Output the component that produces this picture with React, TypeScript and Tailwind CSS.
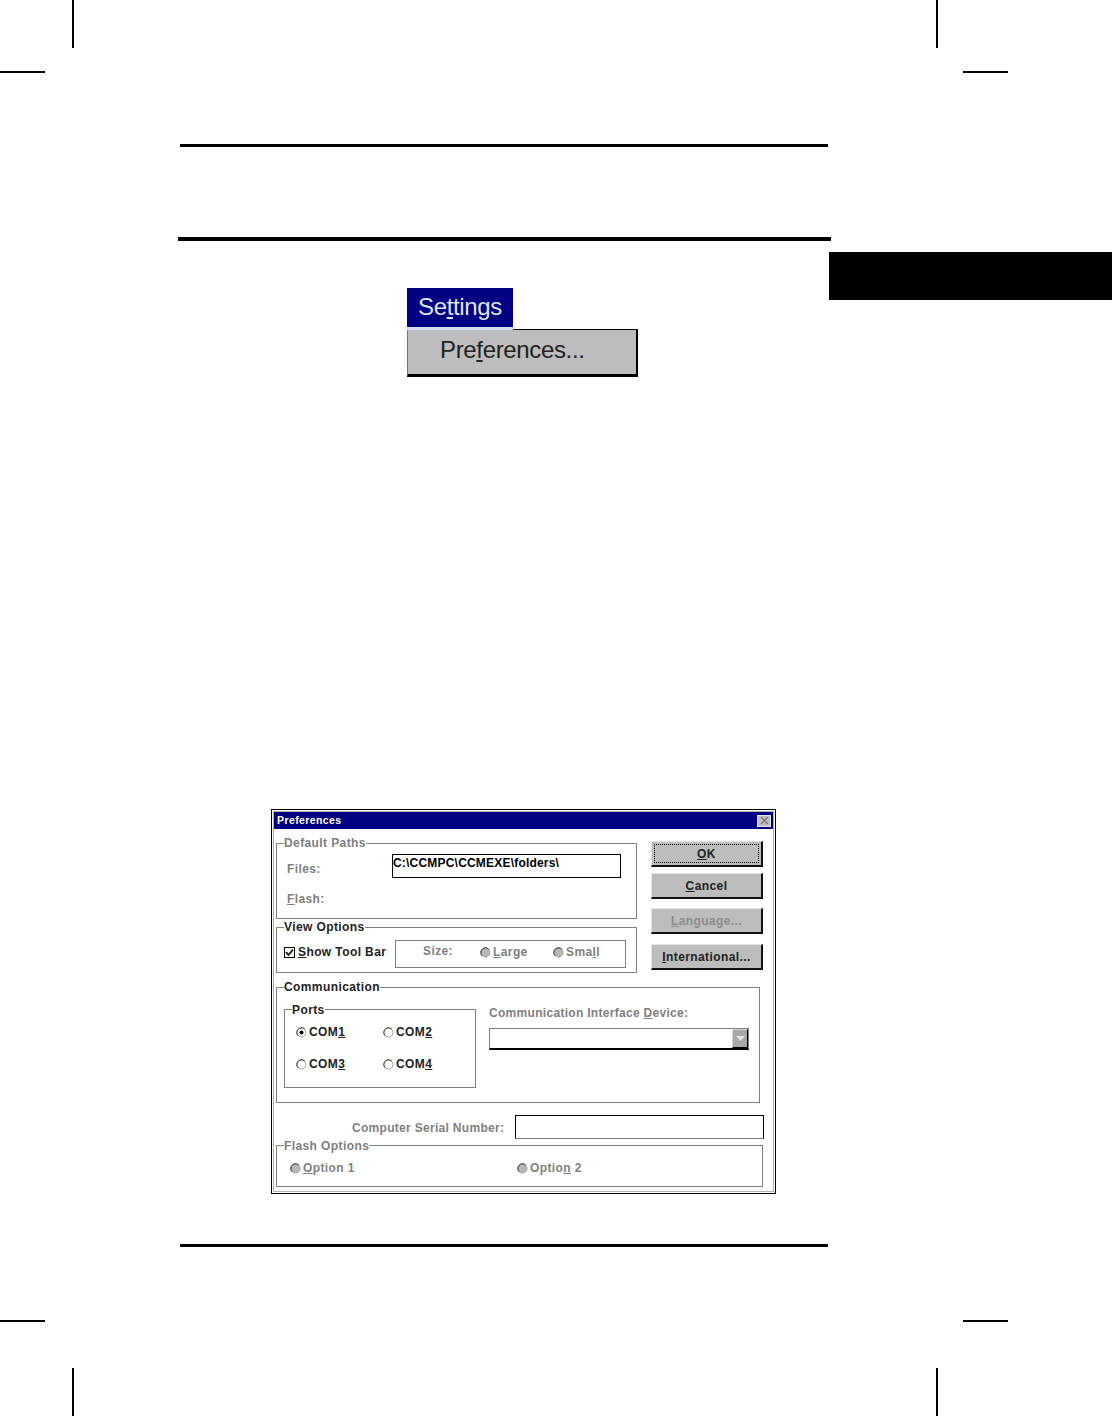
import React from "react";

const F = "font-['Liberation_Sans',Arial,sans-serif]";
const G = "text-[#808080]";

function Group({ title, className, titleClass, children }: { title: string; className: string; titleClass?: string; children?: React.ReactNode }) {
  return (
    <div className={`relative border border-[#808080] ${className}`}>
      <span className={`absolute left-[7px] bg-white whitespace-nowrap text-[12px] leading-[16px] tracking-[0.4px] font-bold ${titleClass ?? G}`}>{title}</span>
      {children}
    </div>
  );
}

function Radio({ checked, disabled }: { checked?: boolean; disabled?: boolean }) {
  return (
    <svg width="11" height="11" viewBox="0 0 11 11" className="shrink-0">
      <circle cx="5.5" cy="5.5" r="4.5" fill={disabled ? "#b8b8b8" : "#fff"} stroke="#a0a0a0" />
      <path d="M2.2 8.8A4.6 4.6 0 0 1 2.2 2.2 4.6 4.6 0 0 1 8.8 2.2" fill="none" stroke="#333" strokeWidth="1" />
      {checked && <circle cx="5.5" cy="5.5" r="2" fill="#000" />}
    </svg>
  );
}

function Btn({ children, className, disabled, focus }: { children: React.ReactNode; className?: string; disabled?: boolean; focus?: boolean }) {
  return (
    <div className={`relative w-[112px] h-[26px] bg-[#bdbdbd] border-l border-t border-[#e4e4e4] border-r-2 border-b-2 border-r-[#111] border-b-[#111] flex items-center justify-center text-[12px] tracking-[0.4px] font-bold ${disabled ? "text-[#8c8c8c]" : "text-[#222]"} ${className ?? ""}`}>
      {focus && <div className="absolute inset-[2px] border border-dotted border-black" />}
      {children}
    </div>
  );
}

function Com({ label, u, checked }: { label: string; u: string; checked?: boolean }) {
  return (
    <div className="flex items-center gap-[2px] text-[12px] leading-[16px] tracking-[0.4px] font-bold text-[#222]">
      <Radio checked={checked} />
      <span>{label}<u>{u}</u></span>
    </div>
  );
}

export default function App() {
  return (
    <div className={`${F} relative w-[1112px] h-[1416px] bg-white overflow-hidden flex flex-col`}>
      {/* top crop marks */}
      <div className="h-[48px] flex shrink-0 pl-[72px]">
        <div className="w-[2px] bg-black" />
        <div className="w-[2px] bg-black ml-[862px]" />
      </div>
      <div className="h-[2px] mt-[23px] flex justify-between shrink-0 pr-[104px]">
        <div className="w-[45px] bg-black" />
        <div className="w-[45px] bg-black" />
      </div>

      {/* header rules */}
      <div className="h-[3px] bg-black mt-[71px] ml-[180px] w-[648px] shrink-0" />
      <div className="h-[4px] bg-black mt-[90px] ml-[178px] w-[653px] shrink-0" />

      {/* tab */}
      <div className="h-[48px] w-[283px] bg-black mt-[11px] ml-[829px] -mb-[12px] shrink-0" />

      {/* menu */}
      <div className="ml-[407px] w-[231px] h-[89px] shrink-0 flex flex-col">
        <div className="h-[42px] flex shrink-0">
          <div className="w-[106px] bg-[#000080] text-[#dfe4f7] text-[24px] leading-[38px] pl-[11px] tracking-[-0.35px] border-b-[3px] border-[#d8dcf0]">
            Se<u className="underline-offset-2">t</u>tings
          </div>
          <div className="flex-1 self-end h-[1px] bg-black" />
        </div>
        <div className="flex-1 bg-[#bdbdbd] border-l border-l-[#777] border-r-2 border-r-black border-b-[3px] border-b-black flex items-center pl-[32px] pb-[4px] text-[24px] text-[#222] tracking-[-0.35px]">
          Pre<u className="underline-offset-2">f</u>erences...
        </div>
      </div>

      {/* dialog */}
      <div className="mt-[432px] ml-[271px] w-[505px] h-[385px] shrink-0 border border-black p-[1px]">
        <div className="h-full border border-[#b0b0b0] flex flex-col">
          <div className="h-[17px] bg-[#000080] flex items-center justify-between pl-[3px] pr-[2px] shrink-0 text-white text-[10.5px] font-bold tracking-[0.4px]">
            <span>Preferences</span>
            <div className="w-[14px] h-[12px] bg-[#c0c0c0] border border-[#e0e0e0] flex items-center justify-center">
              <svg width="9" height="9" viewBox="0 0 9 9"><path d="M1 1l7 7M8 1l-7 7" stroke="#777" strokeWidth="1.4" /></svg>
            </div>
          </div>

          <div className="flex pl-[2px] pt-[14px]">
            {/* left top */}
            <div className="w-[361px] shrink-0">
              <Group title="Default Paths" titleClass={`${G} -top-[9px]`} className="h-[76px] w-[361px] pl-[10px] text-[12px] tracking-[0.4px] font-bold">
                <div className="flex items-start h-[38px] pt-[10px]">
                  <span className={`${G} w-[105px] pt-[7px] leading-[16px]`}>Files:</span>
                  <div className="w-[229px] h-[24px] border border-black bg-white text-black leading-[16px] tracking-[0.2px] text-[12px]">C:\CCMPC\CCMEXE\folders\</div>
                </div>
                <div className={`${G} pt-[9px] leading-[16px]`}><u>F</u>lash:</div>
              </Group>
              <Group title="View Options" titleClass="text-[#222] -top-[9px]" className="h-[46px] w-[361px] mt-[8px] flex items-center pl-[7px] pt-[4px]">
                <div className="w-[11px] h-[11px] bg-white border border-black flex items-center justify-center shrink-0">
                  <svg width="9" height="9" viewBox="0 0 9 9"><path d="M1 4l2.5 3L8 1.5" stroke="#000" strokeWidth="1.6" fill="none" /></svg>
                </div>
                <span className="ml-[3px] w-[97px] shrink-0 whitespace-nowrap text-[12px] tracking-[0.4px] font-bold text-[#222]"><u>S</u>how Tool Bar</span>
                <div className={`mt-[4px] w-[231px] h-[28px] pb-[4px] border border-[#808080] flex items-center text-[12px] tracking-[0.4px] font-bold ${G}`}>
                  <span className="ml-[27px] -mt-[2px] w-[57px]">Size:</span>
                  <Radio disabled />
                  <span className="ml-[2px] w-[60px]"><u>L</u>arge</span>
                  <Radio disabled />
                  <span className="ml-[2px]">Sma<u>l</u>l</span>
                </div>
              </Group>
            </div>
            {/* buttons */}
            <div className="ml-[14px] flex flex-col">
              <Btn focus className="-mt-[2px]"><span><u>O</u>K</span></Btn>
              <Btn className="mt-[6px]"><span><u>C</u>ancel</span></Btn>
              <Btn disabled className="mt-[9px]"><span><u>L</u>anguage...</span></Btn>
              <Btn className="mt-[10px]"><span><u>I</u>nternational...</span></Btn>
            </div>
          </div>

          {/* communication */}
          <div className="ml-[2px]">
            <Group title="Communication" titleClass="text-[#222] -top-[9px]" className="mt-[14px] w-[484px] h-[116px] flex">
              <Group title="Ports" titleClass="text-[#222] -top-[8px]" className="ml-[7px] mt-[21px] w-[192px] h-[79px] shrink-0">
                <div className="grid grid-cols-[87px_1fr] pl-[11px] pt-[14px] gap-y-[16px]">
                  <Com label="COM" u="1" checked />
                  <Com label="COM" u="2" />
                  <Com label="COM" u="3" />
                  <Com label="COM" u="4" />
                </div>
              </Group>
              <div className="ml-[13px] pt-[16px] w-[260px]">
                <div className={`whitespace-nowrap text-[12px] leading-[18px] tracking-[0.3px] font-bold ${G}`}>Communication Interface <u>D</u>evice:</div>
                <div className="mt-[6px] h-[22px] border border-[#808080] border-b-2 border-b-black flex justify-end items-start">
                  <div className="w-[16px] h-[19px] bg-[#a8a8a8] border border-[#d8d8d8] border-r-black border-b-black flex items-center justify-center">
                    <svg width="9" height="6" viewBox="0 0 9 6"><path d="M0 0h9L4.5 5z" fill="#e6e6e6" /></svg>
                  </div>
                </div>
              </div>
            </Group>

            <div className="flex items-center h-[24px] mt-[12px]">
              <span className={`ml-[76px] w-[163px] pt-[2px] whitespace-nowrap text-[12px] tracking-[0.3px] font-bold ${G}`}>Computer Serial Number:</span>
              <div className="w-[249px] h-[24px] border border-black border-b-[#808080]" />
            </div>

            <Group title="Flash Options" titleClass={`${G} -top-[8px]`} className="mt-[6px] w-[487px] h-[42px] flex items-center pl-[13px] pt-[4px] text-[12px] tracking-[0.4px] font-bold">
              <Radio disabled />
              <span className={`${G} ml-[2px] w-[214px]`}><u>O</u>ption 1</span>
              <Radio disabled />
              <span className={`${G} ml-[2px]`}>Optio<u>n</u> 2</span>
            </Group>
          </div>
        </div>
      </div>

      {/* bottom rule */}
      <div className="h-[3px] bg-black mt-[50px] ml-[180px] w-[648px] shrink-0" />

      {/* bottom crop marks */}
      <div className="h-[2px] mt-[73px] flex justify-between shrink-0 pr-[104px]">
        <div className="w-[45px] bg-black" />
        <div className="w-[45px] bg-black" />
      </div>
      <div className="h-[48px] mt-[46px] flex shrink-0 pl-[72px]">
        <div className="w-[2px] bg-black" />
        <div className="w-[2px] bg-black ml-[862px]" />
      </div>
    </div>
  );
}
